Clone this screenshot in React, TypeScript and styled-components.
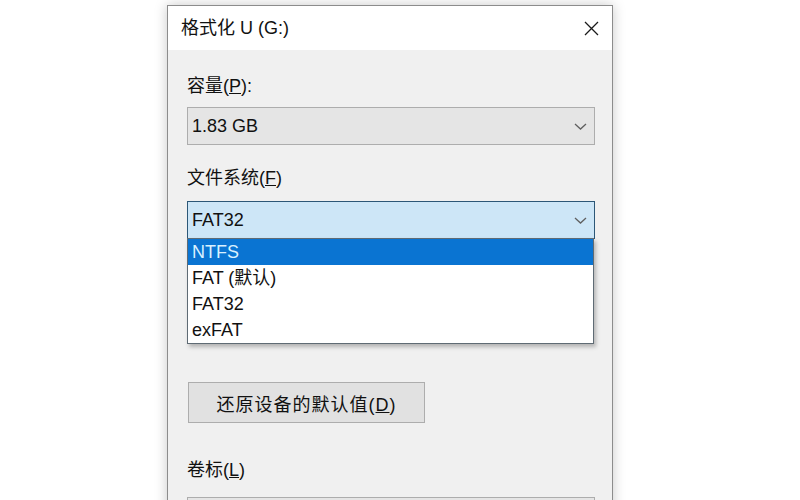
import styled, { createGlobalStyle } from 'styled-components';

const GlobalStyle = createGlobalStyle`
  html, body {
    margin: 0;
    height: 500px;
    overflow: hidden;
    background: #ffffff;
  }
  body {
    font-family: 'Liberation Sans', 'Noto Sans CJK SC', sans-serif;
    font-size: 18px;
    color: #111;
  }
`;

const Page = styled.div`
  padding: 5px 0 0 167px;
`;

const Window = styled.div`
  width: 444px;
  height: 540px;
  border: 1px solid #8c8c8c;
  background: #f0f0f0;
  box-shadow: 0 0 12px rgba(0, 0, 0, 0.22);
`;

const TitleBar = styled.div`
  display: flex;
  align-items: center;
  justify-content: space-between;
  height: 44px;
  padding-left: 13px;
  background: #ffffff;
`;

const Title = styled.span`
  font-size: 18px;
  line-height: 24px;
`;

const CloseButton = styled.div`
  display: flex;
  align-items: center;
  justify-content: center;
  width: 42px;
  height: 44px;
`;

const Body = styled.div`
  display: flex;
  flex-direction: column;
  padding: 0 17px 0 19px;
`;

const Label = styled.div<{ $top: number; $gap: number }>`
  line-height: 24px;
  margin-top: ${(p) => p.$top}px;
  margin-bottom: ${(p) => p.$gap}px;
`;

const Combo = styled.div<{ $focused?: boolean }>`
  position: relative;
  display: flex;
  align-items: center;
  justify-content: space-between;
  height: 36px;
  padding: 0 7px 0 4px;
  border: 1px solid ${(p) => (p.$focused ? '#2c5777' : '#adadad')};
  background: ${(p) => (p.$focused ? '#cde6f7' : '#e5e5e5')};
`;

const ComboText = styled.span`
  line-height: 24px;
`;

const DropList = styled.ul`
  position: absolute;
  top: 36px;
  left: -1px;
  right: 0;
  margin: 0;
  padding: 0;
  list-style: none;
  background: #ffffff;
  border: 1px solid #5f6b74;
  box-shadow: 2px 3px 4px rgba(0, 0, 0, 0.25);
`;

const Option = styled.li<{ $selected?: boolean }>`
  height: 26px;
  line-height: 26px;
  padding-left: 4px;
  background: ${(p) => (p.$selected ? '#0a74d2' : 'transparent')};
  color: ${(p) => (p.$selected ? '#d9f1ff' : '#111')};
`;

const ResetButton = styled.button`
  align-self: flex-start;
  margin: 143px 0 0 1px;
  width: 237px;
  height: 41px;
  border: 1px solid #adadad;
  background: #e1e1e1;
  font: inherit;
  color: #111;
  letter-spacing: 1px;
  padding: 0;
`;

const Chevron = () => (
  <svg width='13' height='7' viewBox='0 0 13 7'>
    <path d='M1 1l5.5 5 5.5-5' fill='none' stroke='#606060' strokeWidth='1.3' />
  </svg>
);

const options = ['NTFS', 'FAT (默认)', 'FAT32', 'exFAT'];

const App = () => {
  return (
    <>
      <GlobalStyle />
      <Page>
        <Window>
          <TitleBar>
            <Title>格式化 U (G:)</Title>
            <CloseButton>
              <svg width='15' height='15' viewBox='0 0 15 15'>
                <path d='M1 1l13 13M14 1L1 14' stroke='#1a1a1a' strokeWidth='1.3' />
              </svg>
            </CloseButton>
          </TitleBar>
          <Body>
            <Label $top={24} $gap={9}>
              容量(<u>P</u>):
            </Label>
            <Combo>
              <ComboText>1.83 GB</ComboText>
              <Chevron />
            </Combo>
            <Label $top={21} $gap={11}>
              文件系统(<u>F</u>)
            </Label>
            <Combo $focused>
              <ComboText>FAT32</ComboText>
              <Chevron />
              <DropList>
                {options.map((name, index) => (
                  <Option key={name} $selected={index === 0}>
                    {name}
                  </Option>
                ))}
              </DropList>
            </Combo>
            <ResetButton>
              还原设备的默认值(<u>D</u>)
            </ResetButton>
            <Label $top={35} $gap={15}>
              卷标(<u>L</u>)
            </Label>
            <Combo>
              <ComboText />
            </Combo>
          </Body>
        </Window>
      </Page>
    </>
  );
};

export default App;
